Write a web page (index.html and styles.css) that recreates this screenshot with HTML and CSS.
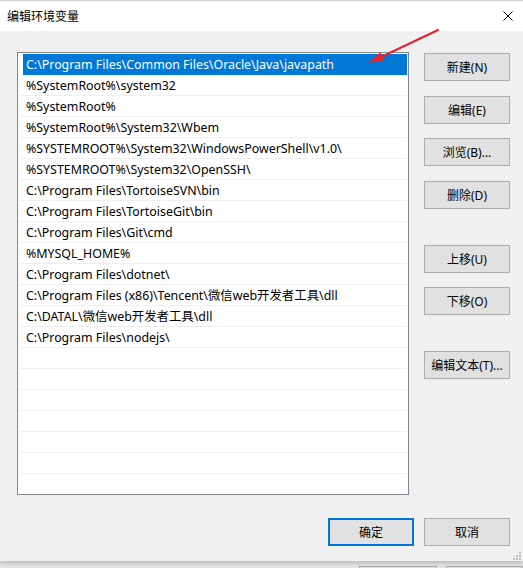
FILE: index.html
```html
<!DOCTYPE html>
<html lang="zh-CN">
<head>
<meta charset="utf-8">
<title>编辑环境变量</title>
<link rel="stylesheet" href="styles.css">
</head>
<body>
<div class="window">
  <div class="titlebar">
    <span class="title">编辑环境变量</span>
    <svg class="close" width="10" height="10" viewBox="0 0 10 10"><path d="M0.5 0.5 L9.5 9.5 M9.5 0.5 L0.5 9.5" stroke="#111" stroke-width="1" fill="none"/></svg>
  </div>
  <div class="body">
    <div class="main">
      <div class="list">
        <div class="row selected"><span class="label">C:\Program Files\Common Files\Oracle\Java\javapath</span></div>
        <div class="row"><span class="label">%SystemRoot%\system32</span></div>
        <div class="row"><span class="label">%SystemRoot%</span></div>
        <div class="row"><span class="label">%SystemRoot%\System32\Wbem</span></div>
        <div class="row"><span class="label">%SYSTEMROOT%\System32\WindowsPowerShell\v1.0\</span></div>
        <div class="row"><span class="label">%SYSTEMROOT%\System32\OpenSSH\</span></div>
        <div class="row"><span class="label">C:\Program Files\TortoiseSVN\bin</span></div>
        <div class="row"><span class="label">C:\Program Files\TortoiseGit\bin</span></div>
        <div class="row"><span class="label">C:\Program Files\Git\cmd</span></div>
        <div class="row"><span class="label">%MYSQL_HOME%</span></div>
        <div class="row"><span class="label">C:\Program Files\dotnet\</span></div>
        <div class="row"><span class="label">C:\Program Files (x86)\Tencent\微信web开发者工具\dll</span></div>
        <div class="row"><span class="label">C:\DATAL\微信web开发者工具\dll</span></div>
        <div class="row"><span class="label">C:\Program Files\nodejs\</span></div>
        <div class="row"></div>
        <div class="row"></div>
        <div class="row"></div>
        <div class="row"></div>
        <div class="row"></div>
        <div class="row"></div>
        <div class="row"></div>
      </div>
      <div class="side">
        <button class="btn">新建(N)</button>
        <button class="btn g15">编辑(E)</button>
        <button class="btn g14">浏览(B)...</button>
        <button class="btn g15">删除(D)</button>
        <button class="btn g36">上移(U)</button>
        <button class="btn g14">下移(O)</button>
        <button class="btn g36">编辑文本(T)...</button>
      </div>
    </div>
    <div class="footer">
      <button class="btn default">确定</button>
      <button class="btn">取消</button>
    </div>
  </div>
  <div class="grip">
    <i style="left:6px;top:0"></i>
    <i style="left:3px;top:3px"></i><i style="left:6px;top:3px"></i>
    <i style="left:0;top:6px"></i><i style="left:3px;top:6px"></i><i style="left:6px;top:6px"></i>
  </div>
  <svg class="arrow" width="523" height="80" viewBox="0 0 523 80">
    <line x1="438" y1="30" x2="380" y2="57.5" stroke="#e8232b" stroke-width="2" stroke-linecap="round"/>
    <polygon points="368,63 384.5,60.2 380.5,52.2" fill="#e8232b"/>
  </svg>
</div>
<div class="backdrop">
  <div class="ghost g1"></div>
  <div class="ghost g2"></div>
</div>
</body>
</html>
```

FILE: styles.css
```css
html, body {
  margin: 0;
  padding: 0;
}
body {
  width: 523px;
  height: 568px;
  overflow: hidden;
  background: #e6e6e6;
  font-family: "Noto Sans", "Noto Sans CJK SC", sans-serif;
  font-size: 12px;
  color: #000;
}
.window {
  position: relative;
  height: 561px;
  background: #f0f0f0;
  box-shadow: 0 2px 5px rgba(0, 0, 0, 0.22);
  z-index: 1;
}
.titlebar {
  height: 30px;
  border-top: 1px solid #d0d0d0;
  background: #fff;
  display: flex;
  align-items: center;
  justify-content: space-between;
  padding: 0 10px 0 7px;
}
.title {
  font-family: "Noto Sans CJK SC", sans-serif;
  font-size: 12px;
  line-height: 16px;
}
.close {
  display: block;
}
.body {
  padding: 21px 13px 0 17px;
}
.main {
  display: flex;
  align-items: flex-start;
}
.list {
  width: 390px;
  height: 440px;
  border: 1px solid #828790;
  background: #fff;
  padding-top: 1px;
  box-sizing: content-box;
  overflow: hidden;
}
.row {
  height: 20px;
  margin: 0 1px;
  border-bottom: 1px solid #efefef;
  padding-left: 4px;
  line-height: 21px;
  font-size: 12.4px;
  white-space: nowrap;
}
.label {
  display: inline-block;
  padding-left: 3px;
}
.row.selected {
  padding-left: 0;
  margin-left: 5px;
}
.row.selected .label {
  display: block;
  background: #0078d7;
  color: #fff;
  padding-left: 3px;
}
.side {
  margin-left: 15px;
  margin-top: 1px;
  display: flex;
  flex-direction: column;
}
.btn {
  width: 86px;
  height: 28px;
  margin: 0;
  padding: 0;
  background: #e1e1e1;
  border: 1px solid #adadad;
  font-family: "Noto Sans", "Noto Sans CJK SC", sans-serif;
  font-size: 12px;
  color: #000;
  box-sizing: border-box;
}
.g14 { margin-top: 14px; }
.g15 { margin-top: 15px; }
.g36 { margin-top: 36px; }
.footer {
  display: flex;
  justify-content: flex-end;
  gap: 10px;
  margin-top: 23px;
}
.btn.default {
  border: 2px solid #0078d7;
}
.grip {
  position: absolute;
  left: 513px;
  top: 552px;
  width: 8px;
  height: 8px;
}
.grip i {
  position: absolute;
  width: 2px;
  height: 2px;
  background: #bcbcbc;
}
.arrow {
  position: absolute;
  left: 0;
  top: 0;
  pointer-events: none;
}
.backdrop {
  position: relative;
  height: 7px;
  padding-top: 5px;
  box-sizing: border-box;
  display: flex;
}
.ghost {
  height: 10px;
  border: 1px solid #adadad;
  background: #e1e1e1;
  box-sizing: border-box;
}
.g1 { margin-left: 359px; width: 86px; }
.g2 { margin-left: 9px; width: 86px; }
```
